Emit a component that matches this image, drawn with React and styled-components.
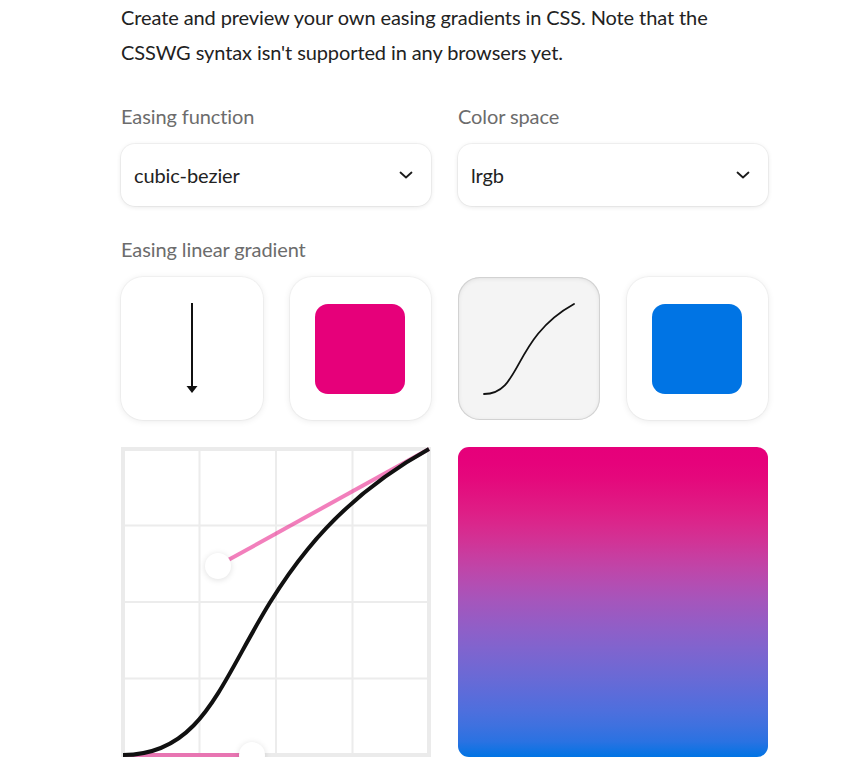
import React from "react";
import styled, { createGlobalStyle } from "styled-components";

const PINK = [230, 0, 122];
const BLUE = [0, 116, 228];
const CP = [0.42, 0, 0.311, 0.619];

function bez(t, a, b) {
  const u = 1 - t;
  return 3 * u * u * t * a + 3 * u * t * t * b + t * t * t;
}
function ease(x) {
  let lo = 0, hi = 1;
  for (let i = 0; i < 40; i++) {
    const m = (lo + hi) / 2;
    if (bez(m, CP[0], CP[2]) < x) lo = m; else hi = m;
  }
  return bez((lo + hi) / 2, CP[1], CP[3]);
}
const toLin = (c) => { const v = c / 255; return v <= 0.04045 ? v / 12.92 : Math.pow((v + 0.055) / 1.055, 2.4); };
const toS = (v) => { const c = v <= 0.0031308 ? v * 12.92 : 1.055 * Math.pow(v, 1 / 2.4) - 0.055; return Math.round(Math.max(0, Math.min(1, c)) * 255); };
function mix(p) {
  return PINK.map((c, i) => toS(toLin(c) * (1 - p) + toLin(BLUE[i]) * p));
}
const stops = [];
for (let i = 0; i <= 20; i++) {
  const x = i / 20;
  const [r, g, b] = mix(ease(x));
  stops.push(`rgb(${r}, ${g}, ${b}) ${(x * 100).toFixed(1)}%`);
}
const GRADIENT = `linear-gradient(to bottom, ${stops.join(", ")})`;

const Global = createGlobalStyle`
  html, body { margin: 0; padding: 0; background: #ffffff; }
  body { font-family: Lato, "Noto Sans", sans-serif; color: #222222; }
`;

const Page = styled.main`
  width: 647px;
  padding-left: 121px;
  display: flex;
  flex-direction: column;
`;

const Intro = styled.p`
  margin: 0;
  font-size: 20px;
  line-height: 35px;
  letter-spacing: -0.1px;
  color: #222222;
`;

const Row = styled.div`
  display: grid;
  grid-template-columns: 1fr 1fr;
  gap: 27px;
  margin-top: ${(p) => p.$top || 0}px;
`;

const Field = styled.div`
  display: flex;
  flex-direction: column;
  gap: 13px;
  margin-top: ${(p) => p.$top || 0}px;
`;

const Label = styled.div`
  font-size: 20px;
  line-height: 30px;
  letter-spacing: -0.1px;
  color: #6c6c6c;
`;

const Select = styled.div`
  height: 62px;
  box-sizing: border-box;
  border-radius: 14px;
  background: #fff;
  box-shadow: 0 0 0 1px rgba(0, 0, 0, 0.04), 0 1px 5px rgba(0, 0, 0, 0.1);
  display: flex;
  align-items: center;
  justify-content: space-between;
  padding: 0 18px 0 13px;
  font-size: 20px;
  letter-spacing: -0.1px;
  color: #222222;
`;

const Tiles = styled.div`
  display: grid;
  grid-template-columns: repeat(4, 1fr);
  gap: 27px;
`;

const Tile = styled.div`
  height: 143px;
  border-radius: 22px;
  box-sizing: border-box;
  display: flex;
  align-items: center;
  justify-content: center;
  background: ${(p) => (p.$active ? "#f4f4f4" : "#ffffff")};
  box-shadow: ${(p) =>
    p.$active
      ? "inset 0 0 0 1px #d2d2d2, inset 0 1px 5px rgba(0,0,0,0.1)"
      : "0 0 0 1px rgba(0,0,0,0.03), 0 1px 7px rgba(0,0,0,0.09)"};
`;

const Swatch = styled.div`
  width: 90px;
  height: 90px;
  border-radius: 13px;
  background: ${(p) => p.$color};
`;

const Graph = styled.div`
  position: relative;
  width: 310px;
  height: 310px;
  svg { display: block; }
`;

const Handle = styled.div`
  position: absolute;
  width: 26px;
  height: 26px;
  margin: -13px 0 0 -13px;
  border-radius: 50%;
  background: #fff;
  box-shadow: 0 1px 6px rgba(0, 0, 0, 0.13);
`;

const Preview = styled.div`
  width: 310px;
  height: 310px;
  border-radius: 11px;
  background: ${GRADIENT};
`;

const Chevron = () => (
  <svg width="14" height="8" viewBox="0 0 14 8" fill="none">
    <path d="M1.5 1.5 L7 6.5 L12.5 1.5" stroke="#1b1b1b" strokeWidth="1.8" strokeLinecap="round" strokeLinejoin="round" />
  </svg>
);

const ArrowDown = () => (
  <svg width="20" height="92" viewBox="0 0 20 92" fill="none">
    <line x1="10" y1="0" x2="10" y2="84" stroke="#111" strokeWidth="2" />
    <path d="M4.5 83 L15.5 83 L10 90 Z" fill="#111" />
  </svg>
);

const EaseIcon = () => (
  <svg width="94" height="94" viewBox="0 0 94 94" fill="none">
    <path
      d={`M2 92 C ${2 + CP[0] * 90} ${92 - CP[1] * 90}, ${2 + CP[2] * 90} ${92 - CP[3] * 90}, 92 2`}
      stroke="#111"
      strokeWidth="1.8"
      strokeLinecap="round"
    />
  </svg>
);

const S = 306;
const O = 2;
const p1 = [O + CP[0] * S, O + S - CP[1] * S];
const p2 = [O + CP[2] * S, O + S - CP[3] * S];

const EasingGraph = () => (
  <Graph>
    <svg width="310" height="310" viewBox="0 0 310 310">
      {[1, 2, 3].map((i) => (
        <g key={i} stroke="#ececec" strokeWidth="2">
          <line x1={O + (S / 4) * i} y1={O} x2={O + (S / 4) * i} y2={O + S} />
          <line x1={O} y1={O + (S / 4) * i} x2={O + S} y2={O + (S / 4) * i} />
        </g>
      ))}
      <rect x={O} y={O} width={S} height={S} fill="none" stroke="#ebebeb" strokeWidth="4" />
      <line x1={O} y1={O + S} x2={p1[0]} y2={p1[1]} stroke="#e6007a" strokeOpacity="0.5" strokeWidth="4" />
      <line x1={O + S} y1={O} x2={p2[0]} y2={p2[1]} stroke="#e6007a" strokeOpacity="0.5" strokeWidth="4" />
      <path
        d={`M${O} ${O + S} C ${p1[0]} ${p1[1]}, ${p2[0]} ${p2[1]}, ${O + S} ${O}`}
        fill="none"
        stroke="#111"
        strokeWidth="4"
      />
    </svg>
    <Handle style={{ left: p1[0], top: p1[1] }} />
    <Handle style={{ left: p2[0], top: p2[1] }} />
  </Graph>
);

export default function App() {
  return (
    <>
      <Global />
      <Page>
        <Intro>
          Create and preview your own easing gradients in CSS. Note that the CSSWG syntax isn't supported in any browsers yet.
        </Intro>
        <Row $top={31}>
          <Field>
            <Label>Easing function</Label>
            <Select>
              <span>cubic-bezier</span>
              <Chevron />
            </Select>
          </Field>
          <Field>
            <Label>Color space</Label>
            <Select>
              <span>lrgb</span>
              <Chevron />
            </Select>
          </Field>
        </Row>
        <Field $top={28}>
          <Label>Easing linear gradient</Label>
          <Tiles>
            <Tile><ArrowDown /></Tile>
            <Tile><Swatch $color="#e6007a" /></Tile>
            <Tile $active><EaseIcon /></Tile>
            <Tile><Swatch $color="#0074e4" /></Tile>
          </Tiles>
        </Field>
        <Row $top={27}>
          <EasingGraph />
          <Preview />
        </Row>
      </Page>
    </>
  );
}
